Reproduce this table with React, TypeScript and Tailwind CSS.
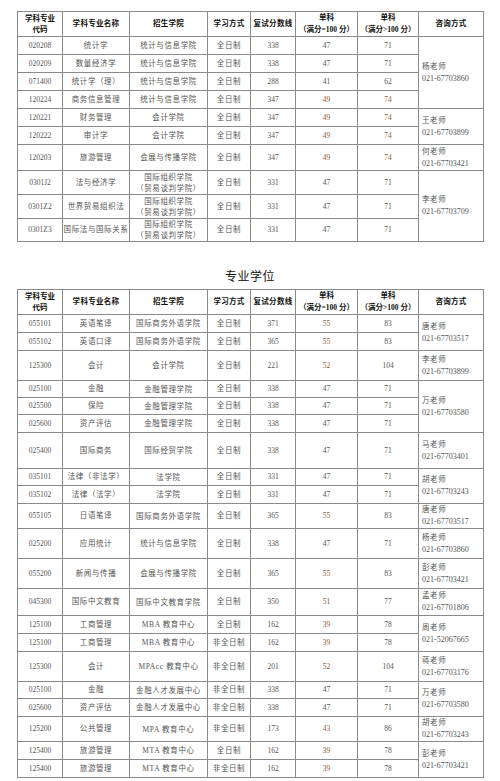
import React from 'react'

type Contact = { name: string; phone: string; span: number }

type Row = {
  code: string
  name: string
  school: string | [string, string]
  mode: string
  total: string
  s1: string
  s2: string
  h: number
  hl1?: boolean
  hl2?: boolean
  contact?: Contact
}

const academic: Row[] = [
  { code: '020208', name: '统计学', school: '统计与信息学院', mode: '全日制', total: '338', s1: '47', s2: '71', h: 18, contact: { name: '杨老师', phone: '021-67703860', span: 4 } },
  { code: '020209', name: '数量经济学', school: '统计与信息学院', mode: '全日制', total: '338', s1: '47', s2: '71', h: 18 },
  { code: '071400', name: '统计学（理）', school: '统计与信息学院', mode: '全日制', total: '288', s1: '41', s2: '62', h: 18 },
  { code: '120224', name: '商务信息管理', school: '统计与信息学院', mode: '全日制', total: '347', s1: '49', s2: '74', h: 18, hl1: true, hl2: true },
  { code: '120221', name: '财务管理', school: '会计学院', mode: '全日制', total: '347', s1: '49', s2: '74', h: 18, hl1: true, hl2: true, contact: { name: '王老师', phone: '021-67703899', span: 2 } },
  { code: '120222', name: '审计学', school: '会计学院', mode: '全日制', total: '347', s1: '49', s2: '74', h: 18, hl1: true, hl2: true },
  { code: '120203', name: '旅游管理', school: '会展与传播学院', mode: '全日制', total: '347', s1: '49', s2: '74', h: 26, hl1: true, hl2: true, contact: { name: '何老师', phone: '021-67703421', span: 1 } },
  { code: '0301J2', name: '法与经济学', school: ['国际组织学院', '（贸易谈判学院）'], mode: '全日制', total: '331', s1: '47', s2: '71', h: 24, contact: { name: '李老师', phone: '021-67703709', span: 3 } },
  { code: '0301Z2', name: '世界贸易组织法', school: ['国际组织学院', '（贸易谈判学院）'], mode: '全日制', total: '331', s1: '47', s2: '71', h: 24 },
  { code: '0301Z3', name: '国际法与国际关系', school: ['国际组织学院', '（贸易谈判学院）'], mode: '全日制', total: '331', s1: '47', s2: '71', h: 23 },
]

const professional: Row[] = [
  { code: '055101', name: '英语笔译', school: '国际商务外语学院', mode: '全日制', total: '371', s1: '55', s2: '83', h: 18, hl1: true, contact: { name: '唐老师', phone: '021-67703517', span: 2 } },
  { code: '055102', name: '英语口译', school: '国际商务外语学院', mode: '全日制', total: '365', s1: '55', s2: '83', h: 18, hl1: true },
  { code: '125300', name: '会计', school: '会计学院', mode: '全日制', total: '221', s1: '52', s2: '104', h: 30, hl1: true, contact: { name: '李老师', phone: '021-67703899', span: 1 } },
  { code: '025100', name: '金融', school: '金融管理学院', mode: '全日制', total: '338', s1: '47', s2: '71', h: 17, contact: { name: '万老师', phone: '021-67703580', span: 3 } },
  { code: '025500', name: '保险', school: '金融管理学院', mode: '全日制', total: '338', s1: '47', s2: '71', h: 17 },
  { code: '025600', name: '资产评估', school: '金融管理学院', mode: '全日制', total: '338', s1: '47', s2: '71', h: 18 },
  { code: '025400', name: '国际商务', school: '国际经贸学院', mode: '全日制', total: '338', s1: '47', s2: '71', h: 36, contact: { name: '马老师', phone: '021-67703401', span: 1 } },
  { code: '035101', name: '法律（非法学）', school: '法学院', mode: '全日制', total: '331', s1: '47', s2: '71', h: 17, contact: { name: '胡老师', phone: '021-67703243', span: 2 } },
  { code: '035102', name: '法律（法学）', school: '法学院', mode: '全日制', total: '331', s1: '47', s2: '71', h: 18 },
  { code: '055105', name: '日语笔译', school: '国际商务外语学院', mode: '全日制', total: '365', s1: '55', s2: '83', h: 24, hl1: true, contact: { name: '唐老师', phone: '021-67703517', span: 1 } },
  { code: '025200', name: '应用统计', school: '统计与信息学院', mode: '全日制', total: '338', s1: '47', s2: '71', h: 30, contact: { name: '杨老师', phone: '021-67703860', span: 1 } },
  { code: '055200', name: '新闻与传播', school: '会展与传播学院', mode: '全日制', total: '365', s1: '55', s2: '83', h: 30, hl1: true, contact: { name: '彭老师', phone: '021-67703421', span: 1 } },
  { code: '045300', name: '国际中文教育', school: '国际中文教育学院', mode: '全日制', total: '350', s1: '51', s2: '77', h: 27, hl1: true, contact: { name: '孟老师', phone: '021-67701806', span: 1 } },
  { code: '125100', name: '工商管理', school: 'MBA 教育中心', mode: '全日制', total: '162', s1: '39', s2: '78', h: 18, hl1: true, contact: { name: '周老师', phone: '021-52067665', span: 2 } },
  { code: '125100', name: '工商管理', school: 'MBA 教育中心', mode: '非全日制', total: '162', s1: '39', s2: '78', h: 18, hl1: true },
  { code: '125300', name: '会计', school: 'MPAcc 教育中心', mode: '非全日制', total: '201', s1: '52', s2: '104', h: 30, hl1: true, contact: { name: '蒋老师', phone: '021-67703176', span: 1 } },
  { code: '025100', name: '金融', school: '金融人才发展中心', mode: '非全日制', total: '338', s1: '47', s2: '71', h: 17, contact: { name: '万老师', phone: '021-67703580', span: 2 } },
  { code: '025600', name: '资产评估', school: '金融人才发展中心', mode: '非全日制', total: '338', s1: '47', s2: '71', h: 18 },
  { code: '125200', name: '公共管理', school: 'MPA 教育中心', mode: '非全日制', total: '173', s1: '43', s2: '86', h: 24, hl1: true, contact: { name: '胡老师', phone: '021-67703243', span: 1 } },
  { code: '125400', name: '旅游管理', school: 'MTA 教育中心', mode: '全日制', total: '162', s1: '39', s2: '78', h: 18, hl1: true, contact: { name: '彭老师', phone: '021-67703421', span: 2 } },
  { code: '125400', name: '旅游管理', school: 'MTA 教育中心', mode: '非全日制', total: '162', s1: '39', s2: '78', h: 18, hl1: true },
]

const td = 'border border-[#8a8a8a] p-0 text-center align-middle'

function ScoreTable({ rows, headH }: { rows: Row[]; headH: number }) {
  return (
    <table className="w-[466px] table-fixed border-collapse border border-[#707070]">
      <colgroup>
        <col className="w-[45px]" />
        <col className="w-[67px]" />
        <col className="w-[78px]" />
        <col className="w-[43px]" />
        <col className="w-[45px]" />
        <col className="w-[62px]" />
        <col className="w-[61px]" />
        <col className="w-[65px]" />
      </colgroup>
      <thead>
        <tr style={{ height: headH }} className="text-[7.5px] font-bold text-[#111]">
          <th className={`${td} leading-[11px]`}>
            学科专业
            <br />
            代码
          </th>
          <th className={`${td} tracking-[0.3px]`}>学科专业名称</th>
          <th className={`${td} tracking-[0.3px]`}>招生学院</th>
          <th className={`${td} tracking-[0.3px]`}>学习方式</th>
          <th className={`${td} tracking-[0.3px]`}>复试分数线</th>
          <th className={`${td} leading-[12px]`}>
            单科
            <br />
            （满分=100 分）
          </th>
          <th className={`${td} leading-[12px]`}>
            单科
            <br />
            （满分&gt;100 分）
          </th>
          <th className={`${td} tracking-[0.3px]`}>咨询方式</th>
        </tr>
      </thead>
      <tbody className="text-[7.5px] text-[#555]">
        {rows.map((r, i) => (
          <tr key={i} style={{ height: r.h }}>
            <td className={td}>{r.code}</td>
            <td className={`${td} tracking-[0.6px]`}>{r.name}</td>
            <td className={`${td} tracking-[0.6px] leading-[11px]`}>
              {Array.isArray(r.school) ? (
                <>
                  {r.school[0]}
                  <br />
                  {r.school[1]}
                </>
              ) : (
                r.school
              )}
            </td>
            <td className={`${td} tracking-[0.6px]`}>{r.mode}</td>
            <td className={td}>{r.total}</td>
            <td className={`${td} ${r.hl1 ? 'text-[#8b5a32]' : ''}`}>{r.s1}</td>
            <td className={`${td} ${r.hl2 ? 'text-[#8b5a32]' : ''}`}>{r.s2}</td>
            {r.contact && (
              <td rowSpan={r.contact.span} className="border border-[#8a8a8a] p-0 pl-[3px] text-left align-middle text-[7.5px] leading-[12px] text-[#555]">
                <div className="tracking-[0.6px]">{r.contact.name}</div>
                <div className="text-[8px]">{r.contact.phone}</div>
              </td>
            )}
          </tr>
        ))}
      </tbody>
    </table>
  )
}

export default function App() {
  return (
    <div
      className="min-h-[781px] w-[500px] bg-white pl-[17px] pt-[11px]"
      style={{ fontFamily: '"Liberation Serif", "Noto Sans CJK SC", serif' }}
    >
      <ScoreTable rows={academic} headH={22} />
      <div className="flex w-[466px] justify-center pt-[29px] pb-[6px] text-[12px] leading-[12px] tracking-[0.5px] text-[#111]">
        专业学位
      </div>
      <ScoreTable rows={professional} headH={24} />
    </div>
  )
}
